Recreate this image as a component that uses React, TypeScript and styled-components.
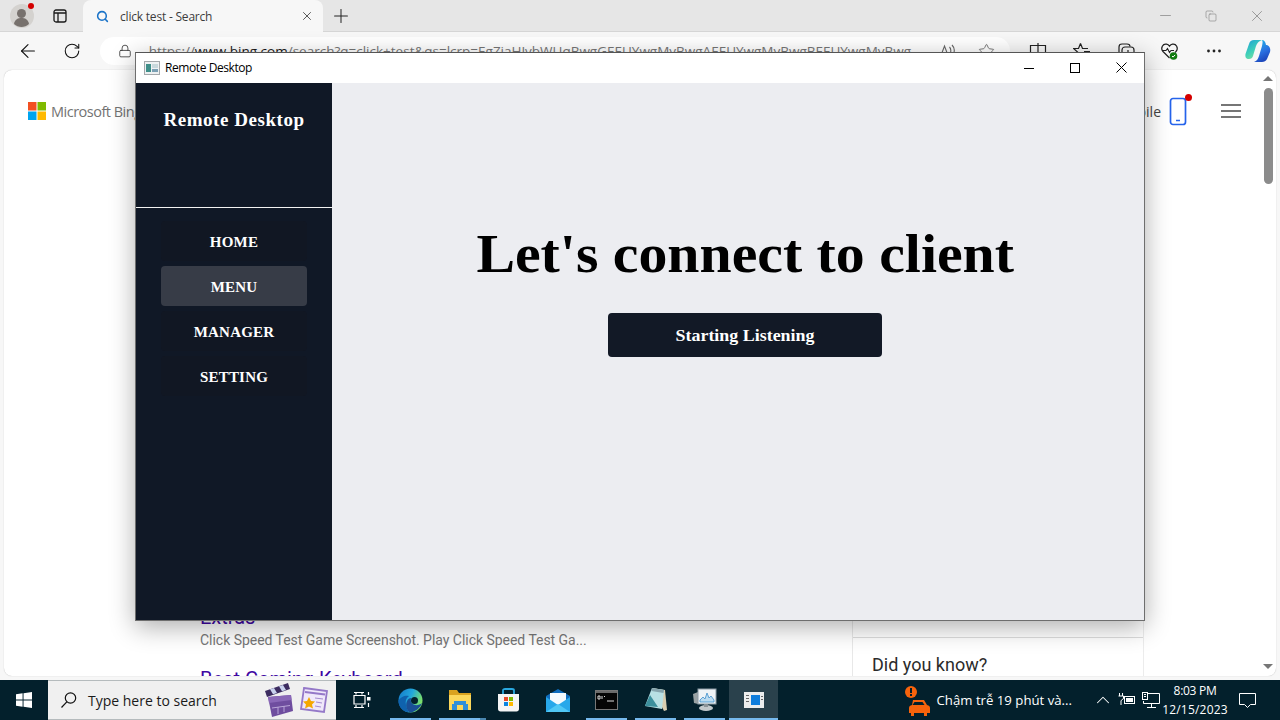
import styled, { createGlobalStyle } from "styled-components";
import { Plus, X, ArrowLeft, RotateCw, Lock, Star, Search, ChevronUp, Minus, Copy } from "lucide-react";

const GlobalStyle = createGlobalStyle`
  html, body {
    margin: 0;
    padding: 0;
    width: 1280px;
    height: 720px;
    overflow: hidden;
    background: #e6e6e6;
    font-family: "Open Sans", "Noto Sans", sans-serif;
  }
  * { box-sizing: border-box; }
`;

const navItems = ["HOME", "MENU", "MANAGER", "SETTING"];

function App() {
    return (
        <>
            <GlobalStyle />
            <Screen>
                <Browser>
                    <TabStrip>
                        <Avatar>
                            <svg width="26" height="26" viewBox="0 0 26 26">
                                <circle cx="13" cy="13" r="12" fill="#d4d2cf" />
                                <circle cx="12.500" cy="10.500" r="4.500" fill="#77716d" />
                                <path d="M5 21c1-5 4-6 7.500-6s6.500 1 7.500 6c-2 2-5 3-7.500 3S7 23 5 21z" fill="#77716d" />
                            </svg>
                            <RedDot $size={6} />
                        </Avatar>
                        <TabActions>
                            <svg width="14" height="14" viewBox="0 0 14 14" fill="none" stroke="#1a1a1a" strokeWidth="1.300">
                                <rect x="1" y="1" width="12" height="12" rx="2" />
                                <path d="M1 4h12M5 4v9" />
                            </svg>
                        </TabActions>
                        <Tab>
                            <Search size={13} color="#1a73c8" strokeWidth={2.8} />
                            <TabTitle>click test - Search</TabTitle>
                            <X size={14} color="#444" strokeWidth={1.5} />
                        </Tab>
                        <NewTab>
                            <Plus size={22} color="#222" strokeWidth={1.1} />
                        </NewTab>
                        <CaptionGroup>
                            <CaptionButton><Minus size={17} strokeWidth={1} /></CaptionButton>
                            <CaptionButton><Copy size={12} strokeWidth={1.2} /></CaptionButton>
                            <CaptionButton><X size={18} strokeWidth={1} /></CaptionButton>
                        </CaptionGroup>
                    </TabStrip>
                    <Toolbar>
                        <ToolIcon><ArrowLeft size={22} strokeWidth={1.2} color="#111" /></ToolIcon>
                        <ToolIcon><RotateCw size={18} strokeWidth={1.4} color="#111" /></ToolIcon>
                        <AddressBar>
                            <Lock size={14} strokeWidth={1.4} color="#333" />
                            <UrlText>
                                https://<strong>www.bing.com</strong>/search?q=click+test&qs=lcrp=EgZjaHJvbWUqBwgGEEUYwgMyBwgAEEUYwgMyBwgBEEUYwgMyBwg
                            </UrlText>
                            <AddressIcons>
                                <svg width="18" height="18" viewBox="0 0 18 18" fill="none" stroke="#666" strokeWidth="1.100">
                                    <path d="M2 16 6.500 4 11 16M3.500 12h6M11.500 5c1.500 1.500 1.500 4 1 6M14 3c2.500 2.500 2.500 6.500 1.500 9" />
                                </svg>
                                <Star size={17} strokeWidth={1.2} color="#666" />
                            </AddressIcons>
                        </AddressBar>
                        <ToolTray>
                            <ToolSlot>
                                <svg width="18" height="18" viewBox="0 0 18 18" fill="none" stroke="#222" strokeWidth="1.200">
                                    <path d="M1.500 3.500h15v11h-15zM9 1v16" />
                                </svg>
                            </ToolSlot>
                            <ToolSlot>
                                <svg width="18" height="18" viewBox="0 0 18 18" fill="none" stroke="#222" strokeWidth="1.200">
                                    <path d="M7.500 1.500 9.500 6.500H15M7.500 1.500 5.500 6.500H.5L4.500 10 3 15.500l4.500-3M11 9.500h6M10 13h7" />
                                </svg>
                            </ToolSlot>
                            <ToolSlot>
                                <svg width="18" height="18" viewBox="0 0 18 18" fill="none" stroke="#222" strokeWidth="1.200">
                                    <path d="M2 12V5c0-2 1-3 3-3h5c2 0 3 1 3 2.500" />
                                    <rect x="5" y="5" width="12" height="11" rx="3" />
                                    <path d="M11 8v5M8.500 10.500h5" />
                                </svg>
                            </ToolSlot>
                            <ToolSlot>
                                <svg width="20" height="20" viewBox="0 0 20 20" fill="none">
                                    <path d="M9.500 17 3 10.500C0 7 3 2.500 6.500 3.200 8 3.500 9 4.500 9.500 5.200 10 4.500 11 3.500 12.500 3.200 16 2.500 19 7 16 10.500L15 11.500" stroke="#222" strokeWidth="1.200" />
                                    <path d="M2.500 9.500h3.500l1.500-2 2 4 1.500-2h3" stroke="#222" strokeWidth="1.100" />
                                    <circle cx="13.500" cy="15" r="3.800" fill="#107c10" />
                                    <path d="M12 15l1.100 1.100 2-2.200" stroke="#fff" strokeWidth="1" />
                                </svg>
                            </ToolSlot>
                            <ToolSlot>
                                <svg width="16" height="4" viewBox="0 0 16 4" fill="#222">
                                    <circle cx="2.500" cy="2" r="1.400" />
                                    <circle cx="8" cy="2" r="1.400" />
                                    <circle cx="13.500" cy="2" r="1.400" />
                                </svg>
                            </ToolSlot>
                            <ToolSlot>
                                <svg width="26" height="24" viewBox="0 0 26 24">
                                    <defs>
                                        <linearGradient id="cpA" x1="0" y1="0" x2="0.6" y2="1">
                                            <stop offset="0" stopColor="#1e9fd8" />
                                            <stop offset="0.6" stopColor="#3fd0b8" />
                                            <stop offset="1" stopColor="#7fe0a0" />
                                        </linearGradient>
                                        <linearGradient id="cpB" x1="0.3" y1="0" x2="0.7" y2="1">
                                            <stop offset="0" stopColor="#1fb4e8" />
                                            <stop offset="0.55" stopColor="#2a6fe0" />
                                            <stop offset="1" stopColor="#1b3fb4" />
                                        </linearGradient>
                                    </defs>
                                    <path d="M9 1h8c-3 1-5 3-6 6L8 17c-.5 2-2 3-4 3C1 20 0 18 .5 15L4 5c.7-2.500 2.500-4 5-4z" fill="url(#cpA)" />
                                    <path d="M17 1c2 0 3 1.500 3.500 3l.5 2h1c2.500 1 4 4 3 7l-3 7c-.8 2-3 3-5 3H9c3-1 4-3 5-6l3-10c.5-2.500 1-4 0-6z" fill="url(#cpB)" />
                                </svg>
                            </ToolSlot>
                        </ToolTray>
                    </Toolbar>
                    <Page>
                        <PageHeader>
                            <BingLogo>
                                <svg width="18" height="18" viewBox="0 0 18 18">
                                    <rect width="8.500" height="8.500" fill="#f25022" />
                                    <rect x="9.500" width="8.500" height="8.500" fill="#7fba00" />
                                    <rect y="9.500" width="8.500" height="8.500" fill="#00a4ef" />
                                    <rect x="9.500" y="9.500" width="8.500" height="8.500" fill="#ffb900" />
                                </svg>
                                Microsoft Bing
                            </BingLogo>
                            <HeaderRight>
                                <MobileLabel>Mobile</MobileLabel>
                                <PhoneIcon>
                                    <svg width="18" height="29" viewBox="0 0 18 29" fill="none">
                                        <rect x="1.500" y="1.500" width="15" height="26" rx="2.500" stroke="#2563eb" strokeWidth="1.700" />
                                        <path d="M7 23.500h4" stroke="#2563eb" strokeWidth="1.500" />
                                    </svg>
                                    <RedDot $size={7} />
                                </PhoneIcon>
                                <Hamburger>
                                    <span />
                                    <span />
                                    <span />
                                </Hamburger>
                            </HeaderRight>
                        </PageHeader>
                        <PageBody>
                            <Results>
                                <ResultLink>Extras</ResultLink>
                                <ResultText>Click Speed Test Game Screenshot. Play Click Speed Test Ga...</ResultText>
                                <ResultLink>Best Gaming Keyboard</ResultLink>
                            </Results>
                            <Aside>
                                <AsideCard>Did you know?</AsideCard>
                            </Aside>
                            <ScrollBar>
                                <ScrollArrow $up />
                                <ScrollThumb />
                                <ScrollArrow />
                            </ScrollBar>
                        </PageBody>
                    </Page>
                </Browser>
                <Taskbar>
                    <StartButton>
                        <svg width="16" height="16" viewBox="0 0 17 17" fill="#fff">
                            <path d="M0 2.400 7 1.400v6.700H0zM8 1.300 17 0v8.100H8zM0 9h7v6.700l-7-1zM8 9h9v8l-9-1.300z" />
                        </svg>
                    </StartButton>
                    <SearchBox>
                        <svg width="18" height="18" viewBox="0 0 18 18" fill="none" stroke="#111" strokeWidth="1.200">
                            <circle cx="10.500" cy="7" r="5.200" />
                            <path d="M6.800 10.800 1.500 16.500" />
                        </svg>
                        <SearchHint>Type here to search</SearchHint>
                        <SearchArt>
                            <svg width="32" height="36" viewBox="0 0 32 36">
                                <path d="M5 15 28 13l2 16-21 6z" fill="#6f4d9f" />
                                <path d="M5 15 28 13l.5 5L6 21z" fill="#8a68b8" />
                                <path d="M2 9 25 1l2 6L4 15z" fill="#3c2c60" />
                                <path d="M7 7.300 11 6l3 5-4 1.300zM16 4.300 20 3l3 5-4 1.300z" fill="#c9d2ee" />
                                <path d="M9 26l18-2.500M15 25v7M21 24v6" stroke="#b9a5d8" strokeWidth="1" />
                            </svg>
                            <svg width="28" height="26" viewBox="0 0 28 26">
                                <path d="M4 1 27 4l-3 21L1 22z" fill="#efe8fa" stroke="#9478c8" strokeWidth="1.800" />
                                <path d="M5 5l20 2.500" stroke="#9478c8" strokeWidth="2" />
                                <path d="M15 11l8 1M16 15l6 1M15 19l6 1" stroke="#a48ad0" strokeWidth="1" />
                                <path d="M9 10l2 4 4 .5-3 3 1 4-4-2-4 2 1-4-3-3 4-.5z" fill="#f5a800" />
                            </svg>
                        </SearchArt>
                    </SearchBox>
                    <TaskSlot>
                        <svg width="18" height="18" viewBox="0 0 18 18" fill="none" stroke="#fff" strokeWidth="1.200">
                            <path d="M1 1.500h10M3 1.500v2M9 1.500v2M1 4.500h11v8.500H1zM1 16.500h10M3 14v2.500M9 14v2.500M15.500 1v3M15.500 12v4" />
                            <rect x="14" y="6" width="3.500" height="3.500" fill="#fff" stroke="none" />
                        </svg>
                    </TaskSlot>
                    <TaskSlot $open>
                        <svg width="25" height="25" viewBox="0 0 25 25">
                            <defs>
                                <linearGradient id="ed" x1="0" y1="0" x2="1" y2="0.4">
                                    <stop offset="0" stopColor="#1478c8" />
                                    <stop offset="0.55" stopColor="#22a7dc" />
                                    <stop offset="1" stopColor="#7be06a" />
                                </linearGradient>
                            </defs>
                            <circle cx="12.500" cy="12.500" r="12" fill="url(#ed)" />
                            <path d="M11 24.500C5 24 .5 19 .5 13 2 9 7 7 11 8c-3 2-4 5-3 9 .6 3 2 6 3 7.500z" fill="#0f62ae" />
                            <path d="M24 15c-1.500 5-7 9-12 9.500-3-2-4.500-6-3.500-10 .5-2.500 2.500-4.500 5-4.500-1 1.500-1 4 .5 5.500 3 2.500 7 2 10-.5z" fill="#1a4f96" />
                            <circle cx="16.500" cy="12.500" r="3.500" fill="#03202c" />
                        </svg>
                    </TaskSlot>
                    <TaskSlot $open $stacked>
                        <svg width="22" height="20" viewBox="0 0 22 20">
                            <path d="M0 0h8l2 3h12v17H0z" fill="#d9a21f" />
                            <path d="M0 5h22v15H0z" fill="#fbd75b" />
                            <path d="M5 11h12v3h2v6H3v-6h2z" fill="#2f8fd8" />
                            <rect x="8" y="15" width="6" height="5" fill="#fbd75b" />
                        </svg>
                    </TaskSlot>
                    <TaskSlot>
                        <svg width="23" height="24" viewBox="0 0 23 24">
                            <path d="M6 6V2.500C6 1 7 1 8 1h7c1 0 2 0 2 1.500V6" fill="none" stroke="#29a8e0" strokeWidth="1.800" />
                            <path d="M1 6h21v15c0 1.500-1 2.500-2.500 2.500h-16C2 23.500 1 22.500 1 21z" fill="#f5f5f5" />
                            <rect x="7" y="9" width="4" height="4" fill="#e74a2b" />
                            <rect x="12" y="9" width="4" height="4" fill="#7fba00" />
                            <rect x="7" y="14" width="4" height="4" fill="#0a84e0" />
                            <rect x="12" y="14" width="4" height="4" fill="#ffb900" />
                        </svg>
                    </TaskSlot>
                    <TaskSlot>
                        <svg width="24" height="23" viewBox="0 0 24 23">
                            <path d="M12 0 24 7v16H0V7z" fill="#0f6cbd" />
                            <path d="M4 4h16v9l-8 5-8-5z" fill="#f4fafe" />
                            <path d="M0 8l12 8 12-8v15H0z" fill="#28a8ea" />
                            <path d="M0 23l12-8 12 8z" fill="#50c8f5" />
                        </svg>
                    </TaskSlot>
                    <TaskSlot $open>
                        <svg width="23" height="20" viewBox="0 0 23 20">
                            <rect x=".5" y=".5" width="22" height="19" fill="#050505" stroke="#777" />
                            <rect x="1" y="1" width="21" height="2" fill="#6a6a6a" />
                            <path d="M3 6h2v3H3zM7 6v3M9 6l1 1M12 11h7" stroke="#ddd" strokeWidth="1" fill="none" />
                        </svg>
                    </TaskSlot>
                    <TaskSlot $open>
                        <svg width="24" height="26" viewBox="0 0 24 26">
                            <path d="M8 1 21 3l2 20-3 1z" fill="#d8cdb0" />
                            <path d="M8 1 20 3l-2 19L1 19z" fill="#b8e0e4" />
                            <path d="M6 8 14 20 1 19z" fill="#3c8f9c" />
                            <path d="M8 1 20 3l-.5 3-12-2z" fill="#86a4ad" />
                        </svg>
                    </TaskSlot>
                    <TaskSlot $open>
                        <svg width="24" height="24" viewBox="0 0 24 24">
                            <path d="M0 6l5-2v12l-4-1z" fill="#9aa2a4" />
                            <rect x="5" y="1" width="18" height="15" fill="#eef3f6" stroke="#8b9aa4" />
                            <path d="M7 12l3-3 2 2 2-6 2 5 2-2 3 4v2H7z" fill="#bcdcf0" stroke="#3f8fcb" strokeWidth=".8" />
                            <ellipse cx="13" cy="20" rx="7" ry="3" fill="#c2c8cb" />
                            <rect x="11" y="16" width="4" height="3" fill="#8a9297" />
                        </svg>
                    </TaskSlot>
                    <TaskSlot $open $active>
                        <svg width="20" height="16" viewBox="0 0 20 16">
                            <rect width="20" height="16" fill="#ededed" />
                            <rect x="7" y="3" width="9" height="10" fill="#0f7ddc" />
                            <path d="M2 3h3v1H2zM2 6h3v1H2zM2 9h3v1H2zM17 4h2v1h-2zM17 7h2v1h-2z" fill="#666" />
                        </svg>
                    </TaskSlot>
                    <Tray>
                        <TrafficAlert>
                            <svg width="25" height="31" viewBox="0 0 25 31">
                                <circle cx="6" cy="7" r="6" fill="#f7630c" />
                                <path d="M5 3h2v5H5zM5 9h2v2H5z" fill="#03202c" />
                                <path d="M8 15h11l3 5c2 .4 3 1.500 3 3v5h-3v3h-3v-3H9v3H6v-3H4v-5c0-1.500 1-2.600 3-3z" fill="#f7630c" />
                                <path d="M9.500 17h8l2 3h-12z" fill="#03202c" />
                            </svg>
                            <TrafficText>Chậm trễ 19 phút và...</TrafficText>
                        </TrafficAlert>
                        <TrayIcon><ChevronUp size={22} strokeWidth={1.1} color="#fff" /></TrayIcon>
                        <TrayIcon>
                            <svg width="18" height="14" viewBox="0 0 18 14" fill="none" stroke="#fff" strokeWidth="1">
                                <rect x="6.500" y="3.500" width="10" height="7" />
                                <rect x="8" y="5" width="7" height="4" fill="#fff" stroke="none" />
                                <path d="M1.500 0v3M4.500 0v3M.5 3h5v2c0 2-2.500 1.500-2.500 3v4" />
                            </svg>
                        </TrayIcon>
                        <TrayIcon>
                            <svg width="18" height="17" viewBox="0 0 18 17" fill="none" stroke="#fff" strokeWidth="1">
                                <path d="M6 1.500h11.500v10H1.500V9M9.500 11.500v4M5 15.500h9" />
                                <rect x=".5" y=".5" width="5" height="7" />
                                <path d="M2 2.500h2M2 4.500h2" />
                            </svg>
                        </TrayIcon>
                        <Clock>
                            <ClockTime>8:03 PM</ClockTime>
                            <ClockDate>12/15/2023</ClockDate>
                        </Clock>
                        <NotifyButton>
                            <svg width="17" height="15" viewBox="0 0 17 15" fill="none" stroke="#fff" strokeWidth="1">
                                <path d="M.5.500h16v11h-5l-3 3-3-3h-5z" />
                            </svg>
                        </NotifyButton>
                    </Tray>
                </Taskbar>

                <AppWindow>
                    <TitleBar>
                        <svg width="16" height="14" viewBox="0 0 16 14">
                            <rect x=".5" y=".5" width="15" height="13" fill="#eef1f2" stroke="#a4a8ab" />
                            <rect x="2" y="3" width="5" height="8" fill="#3f8f89" />
                            <rect x="8" y="3" width="6" height="4" fill="#c8d8dc" />
                            <rect x="8" y="8" width="6" height="3" fill="#7ba0b4" />
                        </svg>
                        <WindowTitle>Remote Desktop</WindowTitle>
                        <WindowControls>
                            <WindowControl>
                                <svg width="10" height="10" viewBox="0 0 10 10" stroke="#000" fill="none">
                                    <path d="M0 5.500h10" />
                                </svg>
                            </WindowControl>
                            <WindowControl>
                                <svg width="10" height="10" viewBox="0 0 10 10" stroke="#000" fill="none">
                                    <rect x=".5" y=".5" width="9" height="9" />
                                </svg>
                            </WindowControl>
                            <WindowControl>
                                <svg width="11" height="11" viewBox="0 0 11 11" stroke="#000" fill="none">
                                    <path d="M.5.500l10 10M10.500.500l-10 10" />
                                </svg>
                            </WindowControl>
                        </WindowControls>
                    </TitleBar>
                    <WindowBody>
                        <Sidebar>
                            <Brand>Remote Desktop</Brand>
                            <NavList>
                                {navItems.map((item) => (
                                    <NavItem key={item} $active={item === "MENU"}>{item}</NavItem>
                                ))}
                            </NavList>
                        </Sidebar>
                        <Main>
                            <Heading>Let's connect to client</Heading>
                            <ListenButton><ButtonLabel>Starting Listening</ButtonLabel></ListenButton>
                        </Main>
                    </WindowBody>
                </AppWindow>
            </Screen>
        </>
    );
}

const Screen = styled.div`
  position: relative;
  width: 1280px;
  height: 720px;
  display: flex;
  flex-direction: column;
  overflow: hidden;
`;

const Browser = styled.div`
  flex: 1;
  min-height: 0;
  display: flex;
  flex-direction: column;
  background: #f7f7f7;
`;

const TabStrip = styled.div`
  height: 32px;
  display: flex;
  align-items: center;
  background: #e6e6e6;
  border-bottom: 1px solid #d6d6d6;
`;

const Avatar = styled.div`
  position: relative;
  width: 44px;
  display: flex;
  justify-content: center;
  span {
    position: absolute;
    top: 0;
    left: 28px;
  }
`;

const RedDot = styled.span<{ $size: number }>`
  width: ${(p) => p.$size}px;
  height: ${(p) => p.$size}px;
  border-radius: 50%;
  background: #d40000;
`;

const TabActions = styled.div`
  width: 39px;
  display: flex;
  justify-content: center;
  padding-right: 7px;
`;

const Tab = styled.div`
  width: 240px;
  height: 32px;
  margin-bottom: -1px;
  padding: 0 9px 0 13px;
  display: flex;
  align-items: center;
  background: #f7f7f7;
  border-radius: 8px 8px 0 0;
`;

const TabTitle = styled.span`
  flex: 1;
  margin-left: 11px;
  font-size: 12px;
  letter-spacing: -0.2px;
  color: #3c3c3c;
`;

const NewTab = styled.div`
  width: 36px;
  display: flex;
  justify-content: center;
`;

const CaptionGroup = styled.div`
  margin-left: auto;
  display: flex;
  color: #808080;
`;

const CaptionButton = styled.div`
  width: 46px;
  height: 31px;
  display: flex;
  align-items: center;
  justify-content: center;
`;

const Toolbar = styled.div`
  height: 38px;
  display: flex;
  align-items: center;
  padding-left: 6px;
  background: #f7f7f7;
`;

const ToolIcon = styled.div`
  width: 44px;
  display: flex;
  justify-content: center;
`;

const AddressBar = styled.div`
  width: 912px;
  height: 28px;
  margin-left: 6px;
  padding: 0 15px 0 18px;
  display: flex;
  align-items: center;
  gap: 17px;
  background: #fff;
  border-radius: 14px;
`;

const UrlText = styled.div`
  flex: 1;
  overflow: hidden;
  white-space: nowrap;
  font-size: 13.500px;
  color: #767676;
  strong {
    font-weight: 400;
    color: #1a1a1a;
  }
`;

const AddressIcons = styled.div`
  margin-left: 8px;
  display: flex;
  align-items: center;
  gap: 22px;
`;

const ToolTray = styled.div`
  flex: 1;
  display: flex;
  align-items: center;
  padding-left: 6px;
`;

const ToolSlot = styled.div`
  width: 44px;
  display: flex;
  align-items: center;
  justify-content: center;
`;

const Page = styled.div`
  flex: 1;
  min-height: 0;
  margin: 0 4px 4px;
  display: flex;
  flex-direction: column;
  background: #fff;
  border-radius: 8px;
  overflow: hidden;
  box-shadow: 0 0 1px rgba(0, 0, 0, 0.3);
`;

const PageHeader = styled.div`
  height: 84px;
  padding: 0 35px 2px 24px;
  display: flex;
  align-items: center;
  justify-content: space-between;
`;

const BingLogo = styled.div`
  display: flex;
  align-items: center;
  gap: 5px;
  font-size: 14.500px;
  font-weight: 500;
  letter-spacing: -0.5px;
  color: #737373;
`;

const HeaderRight = styled.div`
  display: flex;
  align-items: center;
`;

const MobileLabel = styled.span`
  font-size: 14px;
  color: #444;
  margin-right: 8px;
`;

const PhoneIcon = styled.div`
  position: relative;
  margin-right: 34px;
  display: flex;
  span {
    position: absolute;
    top: -3px;
    right: -5px;
  }
`;

const Hamburger = styled.div`
  width: 20px;
  display: flex;
  flex-direction: column;
  gap: 4px;
  span {
    height: 2px;
    background: #767676;
  }
`;

const PageBody = styled.div`
  position: relative;
  flex: 1;
  min-height: 0;
  display: flex;
`;

const Results = styled.div`
  width: 848px;
  padding: 450px 0 0 196px;
  font-family: Roboto, sans-serif;
`;

const ResultLink = styled.div`
  font-size: 20px;
  line-height: 26px;
  color: #4007a2;
`;

const ResultText = styled.div`
  margin: 0 0 16px;
  font-size: 14px;
  line-height: 20px;
  letter-spacing: -0.03px;
  color: #767676;
`;

const Aside = styled.div`
  width: 292px;
  height: 100%;
  border-left: 1px solid #e8e8e8;
  border-right: 1px solid #ececec;
  display: flex;
  flex-direction: column;
  justify-content: flex-end;
`;

const AsideCard = styled.div`
  height: 39px;
  padding-top: 17px;
  padding-left: 19px;
  border-top: 1px solid #dcdcdc;
  font-family: Roboto, sans-serif;
  font-size: 18px;
  line-height: 20px;
  color: #2b2b2b;
  overflow: visible;
`;

const ScrollBar = styled.div`
  position: absolute;
  top: -84px;
  right: 0;
  bottom: 0;
  width: 16px;
  display: flex;
  flex-direction: column;
  align-items: center;
`;

const ScrollArrow = styled.div<{ $up?: boolean }>`
  margin: ${(p) => (p.$up ? "6px 0 7px" : "auto 0 7px")};
  width: 0;
  height: 0;
  border-left: 5px solid transparent;
  border-right: 5px solid transparent;
  ${(p) => (p.$up ? "border-bottom: 5px solid #767676;" : "border-top: 5px solid #767676;")}
`;

const ScrollThumb = styled.div`
  width: 9px;
  height: 96px;
  border-radius: 5px;
  background: #8b8b8b;
`;

const Taskbar = styled.div`
  height: 40px;
  display: flex;
  align-items: stretch;
  background: #03202c;
`;

const StartButton = styled.div`
  width: 48px;
  display: flex;
  align-items: center;
  justify-content: center;
`;

const SearchBox = styled.div`
  width: 288px;
  margin-right: 1px;
  padding: 0 8px 0 12px;
  display: flex;
  align-items: center;
  background: #f0f0f0;
  border: 1px solid #b5bbbd;
  border-width: 1px 0;
`;

const SearchHint = styled.span`
  flex: 1;
  margin-left: 10px;
  font-size: 14px;
  color: #1a1a1a;
`;

const SearchArt = styled.div`
  display: flex;
  align-items: center;
  gap: 5px;
`;

const TaskSlot = styled.div<{ $open?: boolean; $active?: boolean; $stacked?: boolean }>`
  position: relative;
  width: 49px;
  display: flex;
  align-items: center;
  justify-content: center;
  background: ${(p) => (p.$active ? "#2a414c" : "transparent")};
  &::after {
    content: "";
    display: ${(p) => (p.$open ? "block" : "none")};
    position: absolute;
    bottom: 0;
    left: ${(p) => (p.$active ? "0" : "4px")};
    right: ${(p) => (p.$active ? "0" : "4px")};
    height: 2px;
    background: #76b9ed;
    ${(p) => p.$stacked && "box-shadow: 6px 0 0 #4a87b0;"}
  }
`;

const Tray = styled.div`
  flex: 1;
  padding-right: 10px;
  display: flex;
  align-items: center;
  justify-content: flex-end;
  color: #fff;
`;

const TrafficAlert = styled.div`
  display: flex;
  align-items: center;
  gap: 7px;
  margin-right: 19px;
`;

const TrafficText = styled.span`
  font-size: 13.200px;
`;

const TrayIcon = styled.div`
  width: 24px;
  display: flex;
  justify-content: center;
`;

const Clock = styled.div`
  width: 70px;
  margin-left: -3px;
  display: flex;
  flex-direction: column;
  align-items: center;
  gap: 3px;
  font-size: 12px;
  line-height: 16px;
`;

const ClockTime = styled.span`
  letter-spacing: -0.3px;
`;

const ClockDate = styled.span`
  letter-spacing: 0.2px;
`;

const NotifyButton = styled.div`
  width: 40px;
  padding-right: 6px;
  display: flex;
  justify-content: center;
`;

const AppWindow = styled.div`
  position: absolute;
  left: 135px;
  top: 52px;
  width: 1010px;
  height: 569px;
  display: flex;
  flex-direction: column;
  border: 1px solid #6e6e6e;
  border-top-color: #555;
  box-shadow: 0 6px 24px rgba(0, 0, 0, 0.32);
`;

const TitleBar = styled.div`
  height: 30px;
  padding: 0 0 1px 8px;
  display: flex;
  align-items: center;
  background: #fff;
`;

const WindowTitle = styled.span`
  margin-left: 5px;
  font-size: 12px;
  letter-spacing: -0.42px;
  color: #000;
`;

const WindowControls = styled.div`
  margin-left: auto;
  display: flex;
`;

const WindowControl = styled.div`
  width: 46px;
  height: 29px;
  display: flex;
  align-items: center;
  justify-content: center;
`;

const WindowBody = styled.div`
  flex: 1;
  min-height: 0;
  display: flex;
`;

const Sidebar = styled.aside`
  width: 196px;
  display: flex;
  flex-direction: column;
  background: #101826;
`;

const Brand = styled.div`
  height: 125px;
  padding-top: 24px;
  border-bottom: 1px solid #f2f2f2;
  font-family: "Liberation Serif", serif;
  font-size: 19px;
  line-height: 25px;
  font-weight: 700;
  letter-spacing: 0.55px;
  text-align: center;
  color: #fff;
`;

const NavList = styled.nav`
  padding: 13px 25px;
  display: flex;
  flex-direction: column;
  gap: 5px;
`;

const NavItem = styled.div<{ $active?: boolean }>`
  height: 40px;
  padding-top: 2px;
  display: flex;
  align-items: center;
  justify-content: center;
  border-radius: 4px;
  font-family: "Liberation Serif", serif;
  font-size: 15px;
  letter-spacing: 0.2px;
  font-weight: 700;
  color: #fff;
  background: ${(p) => (p.$active ? "#373c47" : "#111723")};
`;

const Main = styled.main`
  flex: 1;
  padding: 137px 0 0 14px;
  display: flex;
  flex-direction: column;
  align-items: center;
  background: #ecedf1;
`;

const Heading = styled.h1`
  margin: 0;
  font-family: "Liberation Serif", serif;
  font-size: 54px;
  line-height: 68px;
  font-weight: 700;
  color: #000;
  transform: scaleX(1.07);
`;

const ListenButton = styled.button`
  width: 274px;
  height: 44px;
  margin-top: 25px;
  padding-top: 2px;
  border: none;
  border-radius: 4px;
  background: #121926;
  font-family: "Liberation Serif", serif;
  font-size: 16px;
  font-weight: 700;
  color: #fff;
`;

const ButtonLabel = styled.span`
  display: inline-block;
  transform: scaleX(1.12);
`;

export default App;
